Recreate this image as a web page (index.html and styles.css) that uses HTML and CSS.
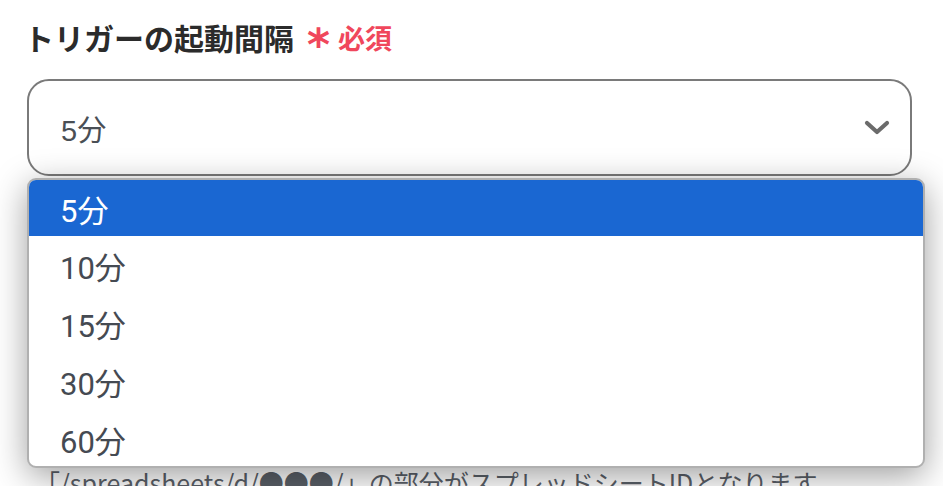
FILE: index.html
```html
<!DOCTYPE html>
<html lang="ja">
<head>
<meta charset="utf-8">
<link rel="stylesheet" href="styles.css">
</head>
<body>
<div class="page">
  <div class="label">
    <span class="label-text">トリガーの起動間隔</span>
    <span class="req"><span class="star">*</span>必須</span>
  </div>
  <div class="select-wrap">
    <div class="select">
      <span class="value">5分</span>
      <svg class="chev" width="26" height="16" viewBox="0 0 26 16"><path d="M3 3 L13 12 L23 3" fill="none" stroke="#6b6b6b" stroke-width="4.2" stroke-linecap="round" stroke-linejoin="round"/></svg>
    </div>
    <div class="menu">
      <div class="opt sel">5分</div>
      <div class="opt">10分</div>
      <div class="opt">15分</div>
      <div class="opt">30分</div>
      <div class="opt">60分</div>
    </div>
  </div>
  <div class="spacer">
    <div class="ghost-input"></div>
  </div>
  <p class="hint">「/spreadsheets/d/●●●/」の部分がスプレッドシートIDとなります。</p>
</div>
</body>
</html>
```
FILE: styles.css
```css
html, body {
  margin: 0;
  padding: 0;
  background: #ffffff;
  overflow: hidden;
  height: 486px;
}
body {
  font-family: "Noto Sans CJK JP", "Noto Sans", sans-serif;
}
.page {
  padding: 14px 31px 0 27px;
}
.label {
  display: flex;
  align-items: center;
  height: 46px;
  margin-left: -3px;
}
.label-text {
  font-size: 30px;
  font-weight: 700;
  color: #2b2b2b;
}
.req {
  display: flex;
  align-items: center;
  color: #f0475c;
  font-size: 27px;
  font-weight: 700;
  margin-left: 13px;
}
.star {
  font-family: "DejaVu Sans", sans-serif;
  font-size: 44px;
  font-weight: 700;
  line-height: 1;
  margin-right: 8px;
  margin-top: 16px;
}
.select-wrap {
  position: relative;
  margin-top: 19px;
}
.select {
  border: 2px solid #7a7a7a;
  border-radius: 22px;
  display: flex;
  align-items: center;
  justify-content: space-between;
  padding: 0 20px 0 32px;
  box-sizing: border-box;
  height: 97px;
}
.value {
  font-family: "Liberation Sans", "Noto Sans CJK JP", sans-serif;
  font-size: 29px;
  color: #4a4f55;
}
.chev {
  display: block;
}
.menu {
  position: absolute;
  left: 0;
  top: 99px;
  width: 898px;
  height: 290px;
  box-sizing: border-box;
  background: #fff;
  border: 2px solid #b0b0b0;
  border-radius: 9px;
  overflow: hidden;
  box-shadow: 0 8px 34px rgba(0, 0, 0, 0.38);
  z-index: 2;
}
.opt {
  height: 58px;
  display: flex;
  align-items: center;
  padding-left: 31px;
  font-family: "Roboto", "Noto Sans CJK JP", sans-serif;
  font-size: 31px;
  color: #454a52;
}
.opt.sel {
  background: #1a67d2;
  color: #ffffff;
  height: 56px;
}
.spacer {
  height: 291px;
  padding-top: 155px;
  box-sizing: border-box;
}
.ghost-input {
  height: 120px;
  border: 2px solid #7a7a7a;
  border-radius: 12px;
}
.hint {
  margin: 0;
  padding-left: 8px;
  font-size: 25px;
  color: #5a6068;
  line-height: 30px;
  white-space: nowrap;
}
```
